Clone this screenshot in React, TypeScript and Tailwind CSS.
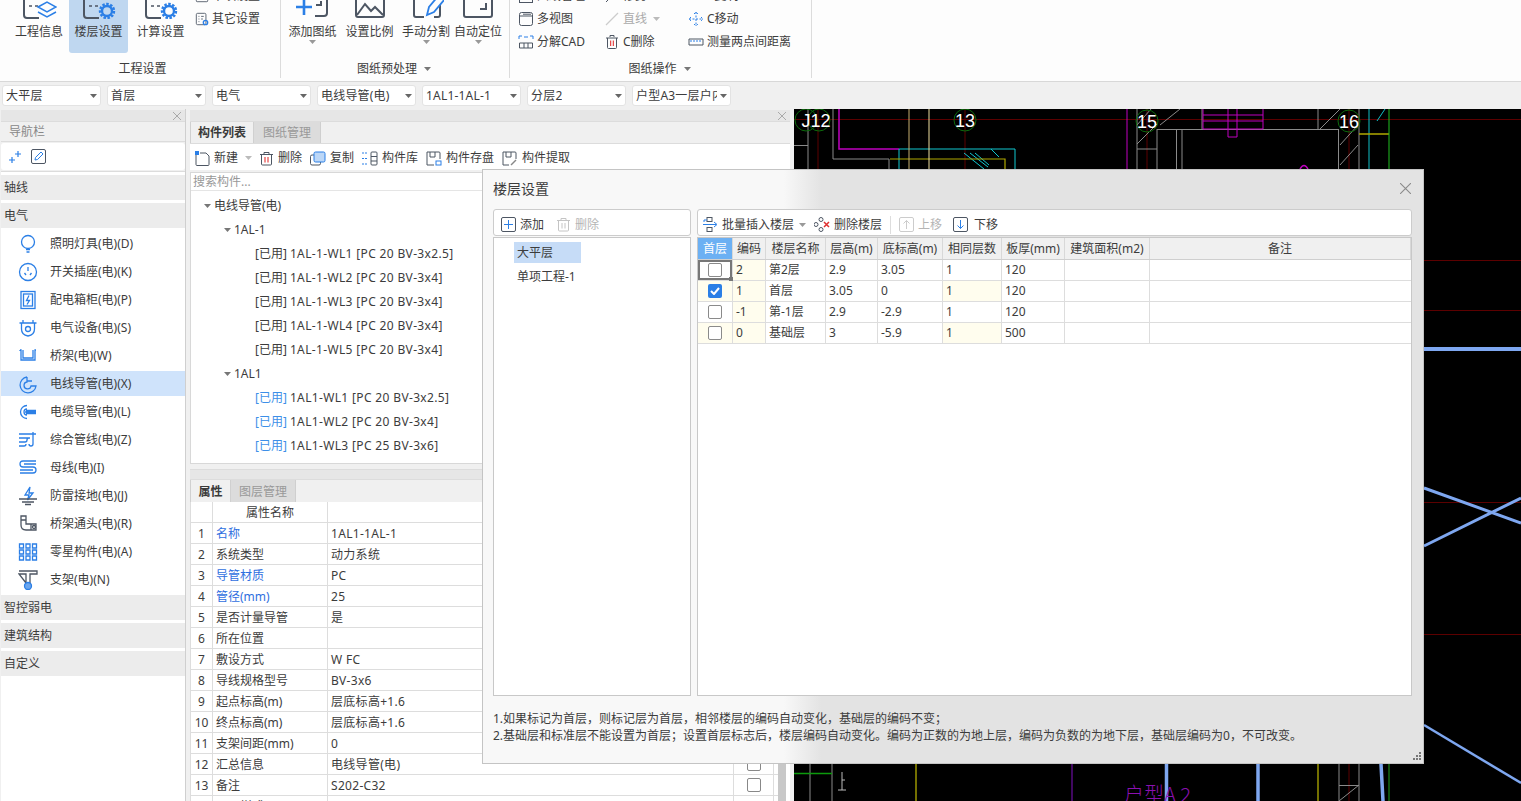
import React from "react";

const B = "#2b7fe6";
const D = "#4d5663";

type IconProps = { children: React.ReactNode; size?: number; box?: number };

const Ico = ({ children, size = 16, box = 16 }: IconProps) => (
  <svg width={size} height={size} viewBox={`0 0 ${box} ${box}`} fill="none" stroke={D} strokeWidth="1" className="shrink-0">
    {children}
  </svg>
);

const Caret = ({ color = "#777" }: { color?: string }) => (
  <svg width="7" height="4" viewBox="0 0 7 4" className="shrink-0">
    <path d="M0 0h7L3.5 4z" fill={color} />
  </svg>
);

const Close = ({ size = 8, color = "#999" }: { size?: number; color?: string }) => (
  <svg width={size} height={size} viewBox="0 0 8 8" stroke={color} strokeWidth="0.8">
    <path d="M0 0l8 8M8 0L0 8" />
  </svg>
);

// ribbon big icons, the top part is cut off by the window edge
const SheetBase = ({ children }: { children?: React.ReactNode }) => (
  <svg width="36" height="32" viewBox="0 0 36 32" fill="none" stroke={D} strokeWidth="2" className="shrink-0">
    <path d="M3 2v26q0 3 3 3h12M27 2v9" />
    <path d="M8 12h3M14 12h8M8 19h3M14 19h3" strokeWidth="1.5" />
    {children}
  </svg>
);

const Gear = () => (
  <g stroke={B} strokeWidth="2.4">
    <circle cx="26" cy="24" r="5" />
    <circle cx="26" cy="24" r="7" strokeDasharray="2.5 1.5" />
  </g>
);

const RibbonBig = ({ label, icon, active, caret, w }: { label: string; icon: React.ReactNode; active?: boolean; caret?: boolean; w: string }) => (
  <div className={`flex flex-col items-center h-[53px] overflow-hidden rounded-b-[3px] ${w} ${active ? "bg-[#bfd7f0]" : ""}`}>
    <div className="-mt-[13px] h-[32px] flex justify-center">{icon}</div>
    <span className="mt-[4px] leading-[18px] whitespace-nowrap">{label}</span>
    {caret && <div className="-mt-[1px]"><Caret color="#999" /></div>}
  </div>
);

const SmallTool = ({ icon, label, muted, caret }: { icon: React.ReactNode; label: string; muted?: boolean; caret?: boolean }) => (
  <div className={`h-[23px] flex items-center gap-[3px] whitespace-nowrap ${muted ? "text-[#aaa]" : ""}`}>
    {icon}
    <span>{label}</span>
    {caret && <span className="ml-[3px]"><Caret color="#bbb" /></span>}
  </div>
);

const Ribbon = () => (
  <div className="h-[82px] flex bg-[#fdfdfd] border-b border-[#d8d8d8] overflow-hidden">
    <div className="w-[281px] h-[78px] flex flex-col border-r border-[#dcdcdc] shrink-0">
      <div className="h-[59px] flex pl-[9px]">
        <RibbonBig w="w-[60px]" label="工程信息" icon={<SheetBase><path d="M17 20l9-5 9 5-9 5z" stroke={B} strokeWidth="1.5" /><path d="M17 25l9 5 9-5" stroke={B} strokeWidth="1.5" /></SheetBase>} />
        <RibbonBig w="w-[59px]" active label="楼层设置" icon={<SheetBase><Gear /></SheetBase>} />
        <div className="w-[3px]" />
        <RibbonBig w="w-[59px]" label="计算设置" icon={<SheetBase><Gear /></SheetBase>} />
        <div className="ml-[5px] -mt-[16px] flex flex-col">
          <SmallTool label="单项设置" icon={<Ico size={14}><rect x="1.5" y="1.5" width="13" height="13" rx="1" /></Ico>} />
          <SmallTool label="其它设置" icon={<Ico size={14}><rect x="1.5" y="1.5" width="11" height="13" rx="1.5" /><path d="M4 5h1M7 5h3M4 8h1M7 8h2M4 11h1" /><circle cx="12" cy="12" r="2.5" stroke={B} strokeWidth="1.5" /></Ico>} />
        </div>
      </div>
      <div className="h-[19px] flex items-center justify-center pl-[5px]">工程设置</div>
    </div>

    <div className="w-[229px] h-[78px] flex flex-col border-r border-[#dcdcdc] shrink-0">
      <div className="h-[59px] flex pl-[3px]">
        <RibbonBig w="w-[57px]" caret label="添加图纸" icon={<svg width="36" height="32" viewBox="0 0 36 32" fill="none" stroke={D} strokeWidth="2"><path d="M3 2v8M32 2v24q0 3-3 3H20M21 18h5v-4" /><path d="M9 12v16M1 20h16" stroke={B} strokeWidth="2.6" /></svg>} />
        <RibbonBig w="w-[57px]" label="设置比例" icon={<svg width="36" height="32" viewBox="0 0 36 32" fill="none" stroke={D} strokeWidth="2"><path d="M4 2v26q0 2 2 2h24q2 0 2-2V2" /><path d="M5 28l8-11 6 7 4-4 8 8" /></svg>} />
        <RibbonBig w="w-[56px]" caret label="手动分割" icon={<svg width="36" height="32" viewBox="0 0 36 32" fill="none" stroke={D} strokeWidth="2"><path d="M6 2v26q0 2 2 2h8M32 18v10q0 2-2 2h-4" /><path d="M19 28l2-8L31 8l5 5-10 12z" stroke={B} strokeWidth="1.8" /></svg>} />
        <RibbonBig w="w-[48px]" caret label="自动定位" icon={<svg width="36" height="32" viewBox="0 0 36 32" fill="none" stroke={D} strokeWidth="2"><path d="M4 2v26q0 2 2 2h24q2 0 2-2V2" /><path d="M20 22h6v-6" /></svg>} />
      </div>
      <div className="h-[19px] flex items-center justify-center gap-[7px] pr-[2px]">图纸预处理<Caret /></div>
    </div>

    <div className="w-[302px] h-[78px] flex flex-col border-r border-[#dcdcdc] shrink-0">
      <div className="flex pl-[8px] -mt-[16px] h-[75px]">
        <div className="w-[86px] flex flex-col">
          <SmallTool label="图纸管理" icon={<Ico><rect x="1.5" y="1.5" width="13" height="13" /></Ico>} />
          <SmallTool label="多视图" icon={<Ico><rect x="1.5" y="1.5" width="13" height="13" rx="2" /><path d="M1.5 5h13M5 3.2h8" /></Ico>} />
          <SmallTool label="分解CAD" icon={<Ico><path d="M1.5 9h13v5h-13zM6 9v5M10 9v5" /><path d="M1 5V2M1 2h3M15 5V2M15 2h-3M6 3h4" stroke={B} /></Ico>} />
        </div>
        <div className="w-[84px] flex flex-col">
          <SmallTool label="修剪" icon={<Ico><path d="M2 14L14 2" /></Ico>} />
          <SmallTool muted caret label="直线" icon={<Ico><path d="M2 14L14 2" stroke="#ccc" strokeWidth="1.2" /></Ico>} />
          <SmallTool label="C删除" icon={<Ico><path d="M2 4h12M6 3V1.5h4V3M3.5 4v9.5q0 1 1 1h7q1 0 1-1V4" /><path d="M6.7 6.5v5.500M9.3 6.5v5.500" stroke="#e02020" /></Ico>} />
        </div>
        <div className="flex flex-col">
          <SmallTool label="C复制" icon={<Ico><rect x="2" y="2" width="9" height="9" /></Ico>} />
          <SmallTool label="C移动" icon={<Ico><path d="M8 1v14M1 8h14M6 3l2-2 2 2M6 13l2 2 2-2M3 6L1 8l2 2M13 6l2 2-2 2" stroke={B} strokeDasharray="2 1.5" /></Ico>} />
          <SmallTool label="测量两点间距离" icon={<Ico><path d="M1 5h14v6H1z" stroke={D} /><path d="M3 6v2M6 6v2M9 6v2M12 6v2" stroke={B} /></Ico>} />
        </div>
      </div>
      <div className="h-[19px] flex items-center justify-center gap-[7px] pr-[2px]">图纸操作<Caret /></div>
    </div>
  </div>
);

const selects = ["大平层", "首层", "电气", "电线导管(电)", "1AL1-1AL-1", "分层2", "户型A3一层户内"];

const SelectBar = () => (
  <div className="h-[27px] bg-[#f0f0f0] flex items-center gap-[6px] pl-[2px]">
    {selects.map((s, i) => (
      <div key={s} className="w-[99px] h-[21px] bg-white rounded-[3px] border border-[#e3e3e3] flex items-center pl-[3px] pr-[3px] justify-between">
        <span className={`overflow-hidden whitespace-nowrap tracking-[0.2px] ${i === 6 ? "w-[81px]" : ""}`}>{s}</span>
        <Caret color="#666" />
      </div>
    ))}
  </div>
);

const NavIcon = ({ children }: { children: React.ReactNode }) => (
  <svg width="20" height="20" viewBox="0 0 20 20" fill="none" stroke={B} strokeWidth="1.3" className="shrink-0">
    {children}
  </svg>
);

const navItems: { label: string; icon: React.ReactNode; active?: boolean }[] = [
  { label: "照明灯具(电)(D)", icon: <><circle cx="10" cy="8" r="6.5" /><path d="M8 15.5h4M8.5 18h3" /></> },
  { label: "开关插座(电)(K)", icon: <><circle cx="10" cy="10" r="8.5" /><path d="M10 5v4M6.5 11l1.5 2M13.5 11L12 13" /></> },
  { label: "配电箱柜(电)(P)", icon: <><rect x="3" y="1.5" width="14" height="17" /><rect x="5.5" y="4" width="9" height="12" /><path d="M11 5.5L8.5 10.500h3L9 14.500" /></> },
  { label: "电气设备(电)(S)", icon: <><path d="M1.500 5h17M5 5V2M15 5V2M3.500 5v6q0 6 6.500 7 6.500-1 6.500-7V5" /><circle cx="10" cy="11" r="2.500" /></> },
  { label: "桥架(电)(W)", icon: <path d="M2 4v1M2 4h1v10h14V4h1M5 4v8h10V4" /> },
  { label: "电线导管(电)(X)", active: true, icon: <path d="M9 3a8 8 0 1 0 9 9h-5a3.500 3.500 0 1 1-4-4V3M9 7h5" /> },
  { label: "电缆导管(电)(L)", icon: <><path d="M9 3.500a6.500 6.500 0 1 0 0 13" /><path d="M9 7a3 3 0 1 0 0 6M8 8.500h10M7 10h11M8 11.500h10" /></> },
  { label: "综合管线(电)(Z)", icon: <path d="M1 4h17M1 8h11M1 12h6q2 0 2-2t2-2M1 16h5q2 0 2-2M15 2v12q0 2-2 2t-2-2" /> },
  { label: "母线(电)(I)", icon: <path d="M18 3H5q-3 0-3 3t3 3h10q3 0 3 3t-3 3H2M18 6H6M2 12h13" /> },
  { label: "防雷接地(电)(J)", icon: <><path d="M12 1L7 9h4l-1.500 5L15 7h-4z" /><path d="M1 13h18M4 16h12M7 18.500h6" stroke={D} /></> },
  { label: "桥架通头(电)(R)", icon: <><path d="M3 2h5v8h10v6H8q-5 0-5-5z" stroke={D} /><path d="M3 6h5M13 10v6" stroke={D} /><circle cx="16" cy="13" r="1.500" stroke={D} /></> },
  { label: "零星构件(电)(A)", icon: <path d="M1.500 2h4v4h-4zM8 2h4v4H8zM14.500 2h4v4h-4zM1.500 8h4v4h-4zM8 8h4v4H8zM14.500 8h4v4h-4zM1.500 14h4v4h-4zM8 14h4v4H8zM14.500 14h4v4h-4z" /> },
  { label: "支架(电)(N)", icon: <><path d="M1 1h18v3h-7v9M8 13V4H1z" stroke={D} /><circle cx="10" cy="16" r="3.500" fill="#6ba6ee" /></> },
];

const Section = ({ children }: { children: React.ReactNode }) => (
  <div className="h-[25px] bg-[#ececec] flex items-center pl-[3px]">{children}</div>
);

const LeftPanel = () => (
  <div className="w-[186px] shrink-0 flex flex-col pl-px border-r border-[#cfcfcf] bg-[#f0f0f0] h-[692px]">
    <div className="h-[11px] mt-px bg-[#e6e6e6] flex items-center justify-end pr-[4px]">
      <Close />
    </div>
    <div className="h-[21px] bg-[#f0f0f0] border-y border-[#dcdcdc] flex items-center pl-[8px] text-[#888]">导航栏</div>
    <div className="h-[27px] mt-px bg-white rounded-[3px] flex items-center pl-[7px] gap-[9px] mb-px">
      <svg width="14" height="14" viewBox="0 0 14 14" stroke={B} strokeWidth="1.2"><path d="M10 1v6M7 4h6M4 7v6M1 10h6" /></svg>
      <svg width="15" height="15" viewBox="0 0 15 15" fill="none" stroke={D}><rect x="0.500" y="0.500" width="14" height="14" rx="1.500" /><path d="M4 11l.5-2.500L10 3l2 2-5.500 5.500z" stroke={B} /></svg>
    </div>
    <div className="flex-1 bg-white border-t border-[#dcdcdc] pt-[3px] flex flex-col gap-[3px]">
      <Section>轴线</Section>
      <Section>电气</Section>
      {navItems.map((n) => (
        <div key={n.label} className={`h-[25px] flex items-center pl-[17px] gap-[12px] whitespace-nowrap ${n.active ? "bg-[#cfe3fb]" : ""}`}>
          <NavIcon>{n.icon}</NavIcon>
          <span>{n.label}</span>
        </div>
      ))}
      <Section>智控弱电</Section>
      <Section>建筑结构</Section>
      <Section>自定义</Section>
    </div>
  </div>
);

const treeLeaves = [
  "1AL-1-WL1 [PC 20 BV-3x2.5]",
  "1AL-1-WL2 [PC 20 BV-3x4]",
  "1AL-1-WL3 [PC 20 BV-3x4]",
  "1AL-1-WL4 [PC 20 BV-3x4]",
  "1AL-1-WL5 [PC 20 BV-3x4]",
];

const treeLeaves2 = ["1AL1-WL1 [PC 20 BV-3x2.5]", "1AL1-WL2 [PC 20 BV-3x4]", "1AL1-WL3 [PC 25 BV-3x6]"];

const TreeRow = ({ children, indent }: { children: React.ReactNode; indent: string }) => (
  <div className={`h-[24px] flex items-center gap-[3px] whitespace-nowrap ${indent}`}>{children}</div>
);

const props: { n: number; name: string; value: string; blue?: boolean; check?: boolean }[] = [
  { n: 1, name: "名称", value: "1AL1-1AL-1", blue: true },
  { n: 2, name: "系统类型", value: "动力系统" },
  { n: 3, name: "导管材质", value: "PC", blue: true },
  { n: 4, name: "管径(mm)", value: "25", blue: true },
  { n: 5, name: "是否计量导管", value: "是" },
  { n: 6, name: "所在位置", value: "" },
  { n: 7, name: "敷设方式", value: "W FC" },
  { n: 8, name: "导线规格型号", value: "BV-3x6" },
  { n: 9, name: "起点标高(m)", value: "层底标高+1.6" },
  { n: 10, name: "终点标高(m)", value: "层底标高+1.6" },
  { n: 11, name: "支架间距(mm)", value: "0" },
  { n: 12, name: "汇总信息", value: "电线导管(电)", check: true },
  { n: 13, name: "备注", value: "S202-C32", check: true },
  { n: 14, name: "显示样式", value: "" },
];

const ToolBtn = ({ icon, label, cls }: { icon: React.ReactNode; label: string; cls?: string }) => (
  <div className={`flex items-center gap-[4px] whitespace-nowrap ${cls ?? ""}`}>
    {icon}
    <span>{label}</span>
  </div>
);

const TrashIcon = ({ c = D, r = "#e02020" }: { c?: string; r?: string }) => (
  <svg width="15" height="15" viewBox="0 0 15 15" fill="none" stroke={c}>
    <path d="M1 3.500h13M5 3V1.500h5V3M2.500 3.500v9.500q0 1 1 1h8q1 0 1-1V3.500" />
    <path d="M6 6v5.500M9 6v5.500" stroke={r} />
  </svg>
);

const MiddlePanel = () => (
  <div className="w-[608px] shrink-0 pl-[4px] pr-[4px] bg-[#f0f0f0] h-[692px] flex flex-col">
    <div className="h-[11px] mt-px bg-[#e6e6e6] flex items-center justify-end pr-[4px]">
      <Close />
    </div>
    <div className="h-[22px] flex border-t border-[#dcdcdc]">
      <div className="w-[64px] flex items-center justify-center font-bold border-x border-[#d0d0d0] text-[#3a3a3a]">构件列表</div>
      <div className="w-[67px] flex items-center justify-center bg-[#dcdcdc] border-r border-[#cfcfcf] text-[#999]">图纸管理</div>
    </div>
    <div className="h-[27px] pt-[2px] bg-white flex items-center pl-[5px] border-t border-[#dcdcdc]">
      <ToolBtn
        label="新建"
        cls="mr-[7px]"
        icon={<svg width="15" height="15" viewBox="0 0 15 15" fill="none" stroke={D}><path d="M3 2.500H1v11q0 1 1 1h11q1 0 1-1V5l-3-3H5" /><rect x="0" y="0" width="4" height="4" fill={B} stroke="none" /></svg>}
      />
      <Caret color="#bbb" />
      <ToolBtn label="删除" cls="ml-[7px] mr-[8px]" icon={<TrashIcon />} />
      <ToolBtn label="复制" cls="mr-[8px]" icon={<svg width="16" height="15" viewBox="0 0 16 15" fill="none" stroke={D}><path d="M4 4H2q-1.500 0-1.500 1.500v7q0 1.500 1.500 1.500h7q1.500 0 1.500-1.500V11" /><rect x="4" y="1" width="11" height="10" rx="1.500" fill="#bcd7f7" stroke={B} /></svg>} />
      <ToolBtn label="构件库" cls="mr-[8px]" icon={<svg width="16" height="15" viewBox="0 0 16 15" fill="none" stroke={D}><path d="M0 2h5M0 7.500h5M0 13h5" stroke={B} strokeDasharray="2 1" /><rect x="9" y="1" width="6" height="13" rx="1" /><path d="M9 5.500h6M9 10h6" /></svg>} />
      <ToolBtn label="构件存盘" cls="mr-[8px]" icon={<svg width="16" height="15" viewBox="0 0 16 15" fill="none" stroke={D}><path d="M8 14H1V1h12q1 0 1 1v6M4 1v5h5V1" /><rect x="10" y="10" width="5" height="4" stroke={B} /></svg>} />
      <ToolBtn label="构件提取" icon={<svg width="16" height="15" viewBox="0 0 16 15" fill="none" stroke={D}><path d="M7 14H1V1h12q1 0 1 1v6M4 1v5h5V1" /><path d="M9 14l5-5" stroke="#888" strokeWidth="1.500" /></svg>} />
    </div>
    <div className="h-[292px] bg-white border border-[#d8d8d8] flex flex-col mt-[2px] shrink-0">
      <div className="h-[18px] pl-[2px] flex items-center text-[#999] border-b border-[#e5e5e5]">搜索构件...</div>
      <div className="pt-[3px]">
        <TreeRow indent="pl-[13px]"><Caret />电线导管(电)</TreeRow>
        <TreeRow indent="pl-[33px]"><Caret />1AL-1</TreeRow>
        {treeLeaves.map((t) => (
          <TreeRow key={t} indent="pl-[64px]"><span>[已用]</span><span className="tracking-[0.35px]">{t}</span></TreeRow>
        ))}
        <TreeRow indent="pl-[33px]"><Caret />1AL1</TreeRow>
        {treeLeaves2.map((t) => (
          <TreeRow key={t} indent="pl-[64px]"><span className="text-[#3d8fe8]">[已用]</span><span className="tracking-[0.35px]">{t}</span></TreeRow>
        ))}
      </div>
    </div>
    <div className="h-[10px] mt-[5px] bg-[#e6e6e6] border-t border-[#dcdcdc] shrink-0" />
    <div className="h-[23px] flex border-t border-[#dcdcdc] shrink-0">
      <div className="w-[41px] pt-[2px] flex items-center justify-center font-bold border-x border-[#d0d0d0] text-[#3a3a3a]">属性</div>
      <div className="w-[65px] pt-[2px] flex items-center justify-center bg-[#dcdcdc] border-r border-[#cfcfcf] text-[#999]">图层管理</div>
    </div>
    <div className="flex-1 flex bg-white overflow-hidden">
      <div className="w-[588px] shrink-0 overflow-hidden">
        <div className="grid grid-cols-[22px_115px_406px_40px_1fr] h-[21px] border-b border-[#dddddd] border-l">
          <div className="border-r border-[#dddddd]" />
          <div className="border-r border-[#dddddd] pt-[2px] flex items-center justify-center">属性名称</div>
          <div className="border-r border-[#dddddd]" />
          <div className="border-r border-[#dddddd]" />
          <div />
        </div>
        {props.map((p) => (
          <div key={p.n} className="grid grid-cols-[22px_115px_406px_40px_1fr] h-[21px] border-b border-[#dddddd] border-l">
            <div className="border-r border-[#dddddd] pt-[2px] flex items-center justify-center">{p.n}</div>
            <div className={`border-r border-[#dddddd] pt-[2px] flex items-center pl-[3px] whitespace-nowrap ${p.blue ? "text-[#2f6fe0]" : ""}`}>{p.name}</div>
            <div className="border-r border-[#dddddd] pt-[2px] flex items-center pl-[3px] tracking-[0.3px]">{p.value}</div>
            <div className="border-r border-[#dddddd] flex items-center justify-center">
              {p.check && <div className="w-[14px] h-[14px] border border-[#888] rounded-[2px]" />}
            </div>
            <div />
          </div>
        ))}
      </div>
      <div className="w-[8px] bg-[#c8c8c8]" />
    </div>
  </div>
);

// drawing on the canvas, coordinates are the screen ones of the window
const CadCanvas = () => (
  <div className="flex-1 h-[692px] bg-black overflow-hidden">
    <svg width="727" height="692" viewBox="794 109 727 692" fill="none" strokeWidth="1">
      <g stroke="#5c0000">
        <path d="M794 119.500h727M818 109v60M965 109v60M1147 109v60M1349 109v60M1424 260.500h97M1424 310.500h97M1424 502.500h97M1424 634.500h97M1349 764v37" />
      </g>
      <g stroke="#8a8a8a">
        <path d="M808 109v60M794 145.500h14M833 109v50h56v10M1137 109v60M1157 129v40M1176.500 129v40M1182 129v40M1157 129.500h181M1338.500 129v40M1359 109v60M1202 109v20M1318 109v20" />
        <path d="M1137 149h20M1137 144l20-20M1160 125l20-16M1320 129l20-20M1340 165l18-20M1340 145l18-20M1137 125l14-16" />
        <path d="M810 764v37M832 764v37M1339 764v37M1359 764v37M1339 785.500h20M1339 801l20-16" />
        <path d="M842 772v18M838 790h8M842 780h3" stroke="#bbb" />
      </g>
      <path d="M839 109v40h60" stroke="#c000c0" strokeWidth="1.500" />
      <path d="M1127 109v60M1203 109v20h60v-20M1203 115h60M1203 121h60M1228 109v28h9v-28" stroke="#c000c0" />
      <path d="M1300 169q4-7 8 0" stroke="#c000c0" strokeWidth="1.500" />
      <path d="M899 169v-20h116v20M991 149l8 8M964 153l20 16M970 153l18 14M975 153l14 12" stroke="#10c8d0" />
      <path d="M1369 109v60M1385 109l-8 12" stroke="#10c0c8" />
      <path d="M890 159h115v10" stroke="#b0a800" strokeWidth="1.200" />
      <path d="M1359 134h30" stroke="#b0a800" strokeWidth="1.500" />
      <path d="M909 109v60" stroke="#c8b070" />
      <path d="M929 109v60" stroke="#f0e0a0" />
      <path d="M1389 109v60" stroke="#20c020" />
      <path d="M794 773.500h38" stroke="#0c9a0c" strokeWidth="1.500" />
      <path d="M916 764v37M1318 764v37" stroke="#e8e000" />
      <path d="M1072 764v37" stroke="#8010c0" />
      <path d="M1389 764v37" stroke="#20a020" />
      <g stroke="#7ea7f0">
        <path d="M1424 349h97" strokeWidth="4" />
        <path d="M1424 488l97 35M1424 546l97-48" strokeWidth="3" />
        <path d="M1424 725l97 58" strokeWidth="2.500" />
        <path d="M1166.500 764v37M1258 764v37M1381 764l2 37" strokeWidth="3.500" />
      </g>
      <g stroke="#0c6a0c">
        <circle cx="806" cy="120" r="11" />
        <circle cx="819" cy="120" r="11" />
        <circle cx="965" cy="120" r="11" />
        <circle cx="1147" cy="121" r="11" />
        <circle cx="1349" cy="121" r="11" />
      </g>
      <g fill="#ffffff" fontSize="18" textAnchor="middle" fontFamily="'Liberation Sans', sans-serif">
        <text x="816" y="127">J12</text>
        <text x="965" y="127">13</text>
        <text x="1147" y="128">15</text>
        <text x="1349" y="128">16</text>
      </g>
      <text x="1124" y="802" fill="#8a10b0" fontSize="20" fontWeight="300" fontFamily="'Noto Sans CJK SC', sans-serif">户型A 2</text>
    </svg>
  </div>
);

const floors = [
  { code: "2", name: "第2层", h: "2.9", base: "3.05", slab: "120", on: false },
  { code: "1", name: "首层", h: "3.05", base: "0", slab: "120", on: true },
  { code: "-1", name: "第-1层", h: "2.9", base: "-2.9", slab: "120", on: false },
  { code: "0", name: "基础层", h: "3", base: "-5.9", slab: "500", on: false },
];

const headers = ["首层", "编码", "楼层名称", "层高(m)", "底标高(m)", "相同层数", "板厚(mm)", "建筑面积(m2)", "备注"];

const cols = "grid grid-cols-[35px_33px_60px_52px_65px_59px_63px_85px_1fr]";

const FloorDialog = () => (
  <div className="absolute left-[482px] top-[169px] w-[942px] h-[595px] border border-[#c4c4c4] bg-[linear-gradient(90deg,#f8f8f8_32%,#e3e3e3_36%)] flex flex-col pl-[10px] pr-[11px]">
    <div className="h-[39px] pb-[3px] flex items-center justify-between shrink-0">
      <span className="text-[14px]">楼层设置</span>
      <span className="mr-[1px]"><Close size={11} color="#8a8a8a" /></span>
    </div>
    <div className="flex gap-[6px] h-[487px] shrink-0">
      <div className="w-[198px] flex flex-col gap-px">
        <div className="h-[27px] pt-[4px] bg-white border border-[#cccccc] rounded-[3px] flex items-center pl-[7px] gap-[12px]">
          <ToolBtn label="添加" icon={<svg width="15" height="15" viewBox="0 0 15 15" fill="none"><rect x="0.500" y="0.500" width="14" height="14" rx="1.500" stroke={D} /><path d="M7.500 3v9M3 7.500h9" stroke={B} /></svg>} />
          <ToolBtn label="删除" cls="text-[#b5b5b5]" icon={<TrashIcon c="#c4c4c4" r="#c4c4c4" />} />
        </div>
        <div className="flex-1 bg-white border border-[#c8c8c8] pl-[20px] pt-[4px]">
          <div className="w-[67px] h-[21px] bg-[#c6dcf7] flex items-center pl-[3px]">大平层</div>
          <div className="h-[24px] mt-[2px] flex items-center pl-[3px] whitespace-nowrap">单项工程-1</div>
        </div>
      </div>
      <div className="w-[715px] flex flex-col gap-px">
        <div className="h-[27px] pt-[4px] bg-white border border-[#cccccc] rounded-[3px] flex items-center pl-[5px]">
          <ToolBtn label="批量插入楼层" cls="mr-[5px]" icon={<svg width="15" height="15" viewBox="0 0 15 15" fill="none" stroke={D}><rect x="4" y="0.500" width="5" height="4" /><rect x="4" y="10.500" width="5" height="4" /><path d="M0 7.500h13M11 5l3 2.500L11 10M1 3h3M1 3v2" stroke={B} /></svg>} />
          <Caret color="#999" />
          <ToolBtn label="删除楼层" cls="ml-[8px] mr-[8px]" icon={<svg width="16" height="15" viewBox="0 0 16 15" fill="none" stroke={D}><circle cx="7" cy="2.500" r="2" /><circle cx="2" cy="7.500" r="2" /><circle cx="7" cy="12.500" r="2" /><path d="M10 5l5 5M15 5l-5 5" stroke="#e03030" strokeWidth="1.500" /></svg>} />
          <div className="w-px h-[18px] bg-[#dddddd] mr-[8px]" />
          <ToolBtn label="上移" cls="text-[#b5b5b5] mr-[11px]" icon={<svg width="15" height="15" viewBox="0 0 15 15" fill="none" stroke="#cccccc"><rect x="0.500" y="0.500" width="14" height="14" rx="1.500" /><path d="M7.500 12V3.500M4.500 6.500l3-3 3 3" /></svg>} />
          <ToolBtn label="下移" cls="gap-[5px]" icon={<svg width="16" height="15" viewBox="0 0 16 15" fill="none"><rect x="0.500" y="0.500" width="14" height="14" rx="1.500" stroke={D} /><path d="M7.500 3v8.500M4.500 8.500l3 3 3-3" stroke={B} /></svg>} />
        </div>
        <div className="flex-1 bg-white border border-[#c8c8c8]">
          <div className={`${cols} h-[22px] border-b border-[#cfcfcf] bg-[#f0f0f0]`}>
            {headers.map((h, i) => (
              <div key={h} className={`flex items-center justify-center whitespace-nowrap border-r border-[#d8d8d8] ${i === 0 ? "bg-[#6cb0f3] text-white" : ""}`}>{h}</div>
            ))}
          </div>
          {floors.map((f, i) => {
            const stripe = i % 2 === 1 ? "bg-[#fffdee]" : "";
            const cell = "border-r border-[#dddddd] flex items-center pl-[3px]";
            return (
              <div key={f.code} className={`${cols} h-[21px] border-b border-[#dddddd]`}>
                <div className={`relative border-r border-[#dddddd] flex items-center justify-center ${stripe}`}>
                  {f.on ? (
                    <div className="w-[14px] h-[14px] rounded-[2px] bg-[#2b7fe6] flex items-center justify-center">
                      <svg width="10" height="8" viewBox="0 0 10 8" fill="none" stroke="white" strokeWidth="2"><path d="M1 4l3 3 5-6" /></svg>
                    </div>
                  ) : (
                    <div className="w-[14px] h-[14px] rounded-[2px] bg-white border border-[#8a8a8a]" />
                  )}
                  {i === 0 && (
                    <div className="absolute inset-0 border-2 border-[#777777]">
                      <div className="absolute -right-[3px] -bottom-[3px] w-[4px] h-[4px] bg-[#777777]" />
                    </div>
                  )}
                </div>
                <div className={`${cell} bg-[#fffdee]`}>{f.code}</div>
                <div className={cell}>{f.name}</div>
                <div className={cell}>{f.h}</div>
                <div className={cell}>{f.base}</div>
                <div className={`${cell} ${stripe}`}>1</div>
                <div className={cell}>{f.slab}</div>
                <div className={cell} />
                <div />
              </div>
            );
          })}
        </div>
      </div>
    </div>
    <div className="mt-[14px] leading-[17px] text-[12px] whitespace-nowrap">
      <div>1.如果标记为首层，则标记层为首层，相邻楼层的编码自动变化，基础层的编码不变；</div>
      <div>2.基础层和标准层不能设置为首层；设置首层标志后，楼层编码自动变化。编码为正数的为地上层，编码为负数的为地下层，基础层编码为0，不可改变。</div>
    </div>
    <svg width="9" height="9" viewBox="0 0 9 9" fill="#777" className="absolute right-[2px] bottom-[2px]">
      <path d="M7 0h2v2H7zM4 3h2v2H4zM7 3h2v2H7zM1 6h2v2H1zM4 6h2v2H4zM7 6h2v2H7z" />
    </svg>
  </div>
);

export default function App() {
  return (
    <div className="relative w-[1521px] h-[801px] overflow-hidden bg-[#f0f0f0] text-[12px] text-[#3c3c3c] font-['Noto_Sans','Noto_Sans_CJK_SC',sans-serif]">
      <Ribbon />
      <SelectBar />
      <div className="flex">
        <LeftPanel />
        <MiddlePanel />
        <CadCanvas />
      </div>
      <FloorDialog />
    </div>
  );
}
